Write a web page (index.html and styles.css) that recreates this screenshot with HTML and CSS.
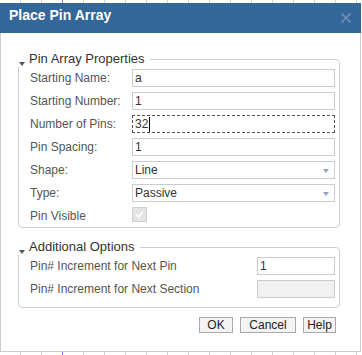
FILE: index.html
```html
<!DOCTYPE html>
<html>
<head>
<meta charset="utf-8">
<link rel="stylesheet" href="styles.css">
</head>
<body>
<div class="dialog">
  <div class="titlebar">
    <span class="title">Place Pin Array</span>
    <svg class="close" width="10" height="10" viewBox="0 0 10 10">
      <path d="M1.5 1.5 L8.5 8.5 M8.5 1.5 L1.5 8.5" stroke="#7d9dc2" stroke-width="1.4" fill="none"/>
      <path d="M0.5 3 V0.5 H3 M7 0.5 H9.5 V3 M9.5 7 V9.5 H7 M3 9.5 H0.5 V7" stroke="#5f84ad" stroke-width="1" fill="none"/>
    </svg>
  </div>
  <div class="body">
    <fieldset class="group">
      <legend><span class="tri"></span>Pin Array Properties</legend>
      <div class="grid props">
        <label class="lbl">Starting Name:</label>
        <div class="field">a</div>
        <label class="lbl">Starting Number:</label>
        <div class="field">1</div>
        <label class="lbl">Number of Pins:</label>
        <div class="field focus">32<span class="caret"></span></div>
        <label class="lbl">Pin Spacing:</label>
        <div class="field">1</div>
        <label class="lbl">Shape:</label>
        <div class="field select">Line<span class="arrow"></span></div>
        <label class="lbl">Type:</label>
        <div class="field select">Passive<span class="arrow"></span></div>
        <label class="lbl">Pin Visible</label>
        <div class="checkcell">
          <span class="check">
            <svg width="13" height="13" viewBox="0 0 13 13"><path d="M3 6.5 L5.5 9 L10 3.5" stroke="#fdfdfd" stroke-width="1.8" fill="none"/></svg>
          </span>
        </div>
      </div>
    </fieldset>
    <fieldset class="group second">
      <legend><span class="tri"></span>Additional Options</legend>
      <div class="grid opts">
        <label class="lbl">Pin# Increment for Next Pin</label>
        <div class="field">1</div>
        <label class="lbl">Pin# Increment for Next Section</label>
        <div class="field disabled"></div>
      </div>
    </fieldset>
    <div class="buttons">
      <button class="btn ok">OK</button>
      <button class="btn cancel">Cancel</button>
      <button class="btn help">Help</button>
    </div>
  </div>
</div>
</body>
</html>
```
FILE: styles.css
```css
html, body {
  margin: 0;
  padding: 0;
}
body {
  width: 362px;
  height: 355px;
  overflow: hidden;
  font-family: "Liberation Sans", Arial, sans-serif;
  font-size: 12px;
  background-color: #ffffff;
  background-image:
    linear-gradient(90deg, transparent 62px, #7b7bd6 62px, #7b7bd6 63px, transparent 63px),
    repeating-linear-gradient(90deg, transparent 0, transparent 20px, #d2d2d2 20px, #d2d2d2 21px);
}
.dialog {
  width: 361px;
  margin-top: 3px;
  background: #fff;
}
.titlebar {
  height: 30px;
  box-sizing: border-box;
  background: #336699;
  padding: 4px 10px 0 9px;
  display: flex;
  justify-content: space-between;
  align-items: flex-start;
}
.title {
  color: #fff;
  font-weight: bold;
  font-size: 14px;
  line-height: 17px;
}
.close {
  margin-top: 6px;
  opacity: 0.9;
}
.body {
  border: 1px solid #cccccc;
  border-top: none;
  height: 319px;
  box-sizing: border-box;
  padding: 18px 20px 0 17px;
}
.group {
  margin: 0;
  width: 322px;
  box-sizing: border-box;
  border: 1px solid #cfcfcf;
  border-radius: 4px;
  padding: 2px 4px 2px 11px;
  min-width: 0;
}
.group.second {
  margin-top: 11px;
  padding-bottom: 9px;
}
legend {
  margin-left: -12px;
  padding: 0 5px 0 1px;
  font-size: 13px;
  line-height: 16px;
  color: #333;
}
.tri {
  display: inline-block;
  width: 0;
  height: 0;
  border-left: 3px solid transparent;
  border-right: 3px solid transparent;
  border-top: 4px solid #555;
  margin-right: 4px;
  vertical-align: -3px;
}
.grid {
  display: grid;
  row-gap: 5px;
  align-items: center;
}
.props {
  grid-template-columns: 102px 1fr;
}
.opts {
  grid-template-columns: 1fr 78px;
}
.lbl {
  color: #555;
  line-height: 18px;
  white-space: nowrap;
}
.field {
  height: 18px;
  box-sizing: border-box;
  border: 1px solid #cccccc;
  color: #333;
  line-height: 16px;
  padding-left: 2px;
  position: relative;
  background: #fff;
}
.field.focus {
  border: 1px dashed #555;
  display: flex;
  align-items: center;
}
.caret {
  display: inline-block;
  width: 1px;
  height: 15px;
  background: #000;
  margin-left: 1px;
}
.field.select .arrow {
  position: absolute;
  right: 5px;
  top: 7px;
  width: 0;
  height: 0;
  border-left: 3px solid transparent;
  border-right: 3px solid transparent;
  border-top: 4px solid #8ea4c6;
}
.field.disabled {
  background: #f1f1f1;
}
.checkcell {
  height: 18px;
  display: flex;
  align-items: flex-start;
}
.check {
  width: 15px;
  height: 15px;
  box-sizing: border-box;
  border: 1px solid #cfcfcf;
  background: #e4e4e4;
  display: flex;
  align-items: center;
  justify-content: center;
}
.buttons {
  display: flex;
  justify-content: flex-end;
  gap: 7px;
  margin-top: 9px;
  padding-right: 4px;
}
.btn {
  height: 16px;
  box-sizing: border-box;
  margin: 0;
  padding: 0;
  border: 1px solid #a9a9a9;
  background: #f3f3f3;
  font-family: "Liberation Sans", Arial, sans-serif;
  font-size: 12px;
  line-height: 14px;
  color: #222;
  text-align: center;
}
.btn.ok { width: 34px; }
.btn.cancel { width: 56px; }
.btn.help { width: 33px; }
```
